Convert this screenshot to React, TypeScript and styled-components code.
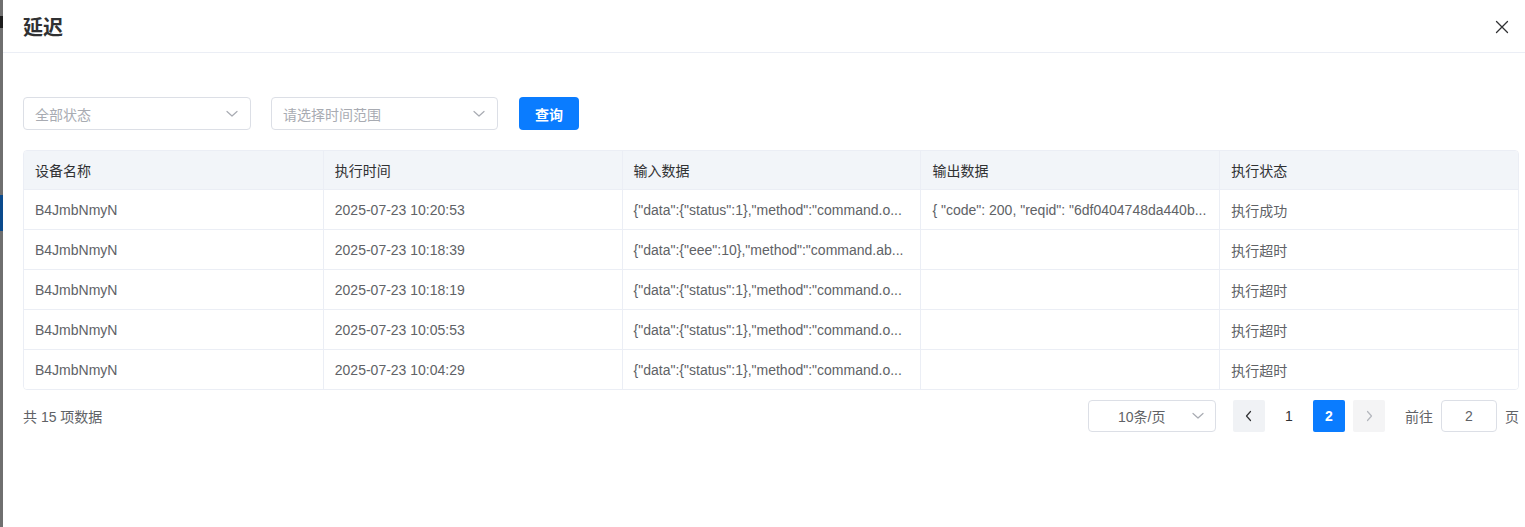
import React from 'react'
import styled, { createGlobalStyle } from 'styled-components'

const GlobalStyle = createGlobalStyle`
  html, body {
    margin: 0;
    padding: 0;
    overflow: hidden;
    background: #6f6f6f;
    font-family: "Liberation Sans", "Noto Sans CJK SC", sans-serif;
  }
`

interface Row {
  device: string
  time: string
  input: string
  output: string
  status: string
}

const rows: Row[] = [
  { device: 'B4JmbNmyN', time: '2025-07-23 10:20:53', input: '{"data":{"status":1},"method":"command.o...', output: '{ "code": 200, "reqid": "6df0404748da440b...', status: '执行成功' },
  { device: 'B4JmbNmyN', time: '2025-07-23 10:18:39', input: '{"data":{"eee":10},"method":"command.ab...', output: '', status: '执行超时' },
  { device: 'B4JmbNmyN', time: '2025-07-23 10:18:19', input: '{"data":{"status":1},"method":"command.o...', output: '', status: '执行超时' },
  { device: 'B4JmbNmyN', time: '2025-07-23 10:05:53', input: '{"data":{"status":1},"method":"command.o...', output: '', status: '执行超时' },
  { device: 'B4JmbNmyN', time: '2025-07-23 10:04:29', input: '{"data":{"status":1},"method":"command.o...', output: '', status: '执行超时' },
]

const columns = ['设备名称', '执行时间', '输入数据', '输出数据', '执行状态']

const Page = styled.div`
  display: flex;
  height: 527px;
  width: 1525px;
`

const Backdrop = styled.div`
  width: 3px;
  flex-shrink: 0;
  display: flex;
  flex-direction: column;
  background: #6f6f6f;
`

const BackdropGlyph = styled.div<{ $top: number; $height: number; $color: string }>`
  margin-top: ${p => p.$top}px;
  height: ${p => p.$height}px;
  background: ${p => p.$color};
`

const Dialog = styled.div`
  flex: 1;
  background: #fff;
  display: flex;
  flex-direction: column;
`

const Header = styled.div`
  height: 53px;
  border-bottom: 1px solid #ebeef5;
  display: flex;
  align-items: center;
  justify-content: space-between;
  padding: 0 16px 0 20px;
  box-sizing: border-box;
`

const Title = styled.h2`
  margin: 0;
  font-family: "Noto Sans CJK SC", sans-serif;
  font-size: 20px;
  font-weight: 700;
  color: #303133;
  line-height: 1;
  padding-top: 2px;
`

const CloseButton = styled.button`
  border: none;
  background: none;
  padding: 0;
  width: 16px;
  height: 16px;
  display: flex;
  align-items: center;
  justify-content: center;
  cursor: pointer;
  margin-top: 1px;
`

const Body = styled.div`
  padding: 44px 7px 0 20px;
  display: flex;
  flex-direction: column;
`

const Filters = styled.div`
  display: flex;
  align-items: center;
  gap: 20px;
  height: 33px;
`

const Select = styled.div<{ $width: number }>`
  width: ${p => p.$width}px;
  height: 33px;
  box-sizing: border-box;
  border: 1px solid #dcdfe6;
  border-radius: 4px;
  display: flex;
  align-items: center;
  justify-content: space-between;
  padding: 0 12px 0 11px;
  font-size: 14px;
  color: #a8abb2;
`

const PrimaryButton = styled.button`
  width: 60px;
  height: 33px;
  border: none;
  border-radius: 4px;
  background: #0a7cff;
  color: #fff;
  font-family: inherit;
  font-size: 14px;
  font-weight: 700;
  cursor: pointer;
  margin-left: 1px;
`

const Table = styled.div`
  margin-top: 20px;
  border: 1px solid #ebeef5;
  border-radius: 4px;
  overflow: hidden;
  width: 1496px;
  box-sizing: border-box;
`

const TableRow = styled.div<{ $head?: boolean }>`
  display: grid;
  grid-template-columns: repeat(5, 1fr);
  height: ${p => (p.$head ? 38 : 40)}px;
  background: ${p => (p.$head ? '#f2f5f9' : '#fff')};
  border-top: ${p => (p.$head ? 'none' : '1px solid #ebeef5')};
  box-sizing: border-box;
`

const Cell = styled.div<{ $head?: boolean }>`
  display: flex;
  align-items: center;
  padding: 0 12px 0 11px;
  font-size: 14px;
  color: ${p => (p.$head ? '#303133' : '#606266')};
  border-left: 1px solid #ebeef5;
  white-space: nowrap;
  overflow: hidden;
  &:first-child {
    border-left: none;
  }
`

const Footer = styled.div`
  margin-top: 10px;
  width: 1496px;
  display: flex;
  align-items: center;
  justify-content: space-between;
  height: 32px;
`

const Total = styled.span`
  font-size: 14px;
  color: #606266;
`

const Pager = styled.div`
  display: flex;
  align-items: center;
`

const SizeSelect = styled.div`
  width: 128px;
  height: 32px;
  box-sizing: border-box;
  border: 1px solid #dcdfe6;
  border-radius: 4px;
  display: flex;
  align-items: center;
  justify-content: space-between;
  padding: 0 11px 0 29px;
  font-size: 14px;
  color: #606266;
  margin-right: 9px;
`

const PageBtn = styled.div<{ $active?: boolean; $muted?: boolean; $plain?: boolean }>`
  width: 32px;
  height: 32px;
  border-radius: 2px;
  display: flex;
  align-items: center;
  justify-content: center;
  font-size: 14px;
  font-weight: ${p => (p.$active ? 700 : 400)};
  background: ${p => (p.$active ? '#0a7cff' : p.$plain ? 'transparent' : p.$muted ? '#f4f4f5' : '#f0f2f5')};
  color: ${p => (p.$active ? '#fff' : '#303133')};
  margin-left: 8px;
`

const JumpLabel = styled.span`
  font-size: 14px;
  color: #606266;
  margin: 0 8px 0 20px;
`

const JumpInput = styled.div`
  width: 56px;
  height: 32px;
  box-sizing: border-box;
  border: 1px solid #dcdfe6;
  border-radius: 4px;
  display: flex;
  align-items: center;
  justify-content: center;
  font-size: 14px;
  color: #606266;
`

const Unit = styled.span`
  font-size: 14px;
  color: #606266;
  margin-left: 8px;
`

const Chevron = ({ dir = 'down', color = '#a8abb2' }: { dir?: 'down' | 'left' | 'right'; color?: string }) => {
  const d = dir === 'down' ? 'M1 3.5 L6 8 L11 3.5' : dir === 'left' ? 'M7.5 1.5 L3.5 6 L7.5 10.5' : 'M4.5 1.5 L8.5 6 L4.5 10.5'
  return (
    <svg width="12" height="12" viewBox="0 0 12 12" fill="none">
      <path d={d} stroke={color} strokeWidth="1.2" strokeLinecap="round" strokeLinejoin="round" />
    </svg>
  )
}

export default function App() {
  return (
    <>
      <GlobalStyle />
      <Page>
        <Backdrop>
          <BackdropGlyph $top={16} $height={12} $color="#1d1d1d" />
          <BackdropGlyph $top={167} $height={36} $color="#0a4a8c" />
        </Backdrop>
        <Dialog>
          <Header>
            <Title>延迟</Title>
            <CloseButton aria-label="close">
              <svg width="14" height="14" viewBox="0 0 14 14">
                <path d="M1.5 1.5 L12.5 12.5 M12.5 1.5 L1.5 12.5" stroke="#303133" strokeWidth="1.3" strokeLinecap="round" />
              </svg>
            </CloseButton>
          </Header>
          <Body>
            <Filters>
              <Select $width={228}>
                全部状态
                <Chevron />
              </Select>
              <Select $width={227}>
                请选择时间范围
                <Chevron />
              </Select>
              <PrimaryButton>查询</PrimaryButton>
            </Filters>
            <Table>
              <TableRow $head>
                {columns.map(c => (
                  <Cell $head key={c}>{c}</Cell>
                ))}
              </TableRow>
              {rows.map((r, i) => (
                <TableRow key={i}>
                  <Cell>{r.device}</Cell>
                  <Cell>{r.time}</Cell>
                  <Cell>{r.input}</Cell>
                  <Cell>{r.output}</Cell>
                  <Cell>{r.status}</Cell>
                </TableRow>
              ))}
            </Table>
            <Footer>
              <Total>共 15 项数据</Total>
              <Pager>
                <SizeSelect>
                  10条/页
                  <Chevron />
                </SizeSelect>
                <PageBtn>
                  <Chevron dir="left" color="#303133" />
                </PageBtn>
                <PageBtn $plain>1</PageBtn>
                <PageBtn $active>2</PageBtn>
                <PageBtn $muted>
                  <Chevron dir="right" color="#b4b7bd" />
                </PageBtn>
                <JumpLabel>前往</JumpLabel>
                <JumpInput>2</JumpInput>
                <Unit>页</Unit>
              </Pager>
            </Footer>
          </Body>
        </Dialog>
      </Page>
    </>
  )
}
